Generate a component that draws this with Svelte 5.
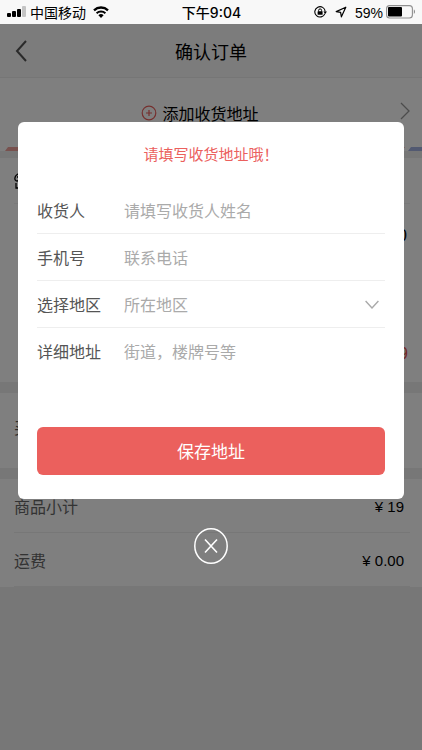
<script lang="ts">
  interface Fee {
    name: string;
    amount: string;
  }

  const fees: Fee[] = [
    { name: '商品小计', amount: '¥ 19' },
    { name: '运费', amount: '¥ 0.00' }
  ];

  let open = $state(true);
  let receiver = $state('');
  let phone = $state('');
  let area = $state('');
  let detail = $state('');

  function close() {
    open = false;
  }

  function save(event: SubmitEvent) {
    event.preventDefault();
    close();
  }
</script>

<div class="screen">
  <div class="status">
    <div class="status-side">
      <svg width="19" height="12" viewBox="0 0 19 12" aria-hidden="true">
        <rect x="0" y="7" width="4" height="4" rx="1" />
        <rect x="5" y="5" width="4" height="6" rx="1" />
        <rect x="10" y="3" width="4" height="8" rx="1" />
        <rect x="15" y="0" width="4" height="11" rx="1" fill="#c4c4c4" />
      </svg>
      <span class="carrier">中国移动</span>
      <svg class="wifi" width="16" height="12" viewBox="0 0 16 12" aria-hidden="true">
        <path d="M1 4.3a10.2 10.2 0 0 1 14 0" fill="none" stroke="#000" stroke-width="2.3" />
        <path d="M3.6 7.2a6.5 6.5 0 0 1 8.8 0" fill="none" stroke="#000" stroke-width="2" />
        <path d="M8 12L5.4 9.3a3.8 3.8 0 0 1 5.2 0z" />
      </svg>
    </div>
    <span class="time">下午9:04</span>
    <div class="status-side status-right">
      <svg width="13" height="12" viewBox="0 0 13 12" fill="none" stroke="#000" aria-hidden="true">
        <path d="M10.9 7.6A5.2 5.2 0 1 1 11.2 5.6" stroke-width="1.1" />
        <path d="M9.4 5.5h3.6l-1.8 2.4z" fill="#000" stroke="none" />
        <path d="M4.6 5.6V4.4a1.5 1.5 0 0 1 3 0v1.2" />
        <rect x="3.6" y="5.3" width="5" height="3.5" rx=".5" fill="#000" stroke="none" />
      </svg>
      <svg width="12" height="12" viewBox="0 0 12 12" fill="none" stroke="#000" aria-hidden="true">
        <path d="M10.8 1.2L1.2 5.6l4.4.8.8 4.4z" stroke-width="1.2" stroke-linejoin="round" />
      </svg>
      <span class="percent">59%</span>
      <svg class="battery" width="30" height="14" viewBox="0 0 30 14" aria-hidden="true">
        <rect x=".6" y=".6" width="25.8" height="12.4" rx="3" fill="none" stroke="#8f8f8f" stroke-width="1.1" />
        <rect x="2" y="2" width="14" height="9.6" rx="1" />
        <path d="M27.8 4.6c1.6.6 1.6 3.8 0 4.4z" fill="#8f8f8f" />
      </svg>
    </div>
  </div>

  <div class="page">
    <header class="nav">
      <a class="back" href="#back" aria-label="返回">
        <svg width="12" height="22" viewBox="0 0 12 22" fill="none" stroke="#555" stroke-width="2" aria-hidden="true">
          <path d="M11 1L2 11l9 10" />
        </svg>
      </a>
      <h1>确认订单</h1>
    </header>

    <section class="address">
      <button type="button" class="add" onclick={() => (open = true)}>
        <svg width="16" height="16" viewBox="0 0 16 16" fill="none" stroke="#eb605d" aria-hidden="true">
          <circle cx="8" cy="8" r="6.8" stroke-width="1.2" />
          <path d="M8 5v6M5 8h6" stroke-width="1.2" />
        </svg>
        添加收货地址
      </button>
      <svg width="10" height="18" viewBox="0 0 10 18" fill="none" stroke="#999" stroke-width="1.3" aria-hidden="true">
        <path d="M1 1l8 8-8 8" />
      </svg>
      <svg class="stripe" width="100%" height="4" aria-hidden="true">
        <defs>
          <pattern id="airmail" width="62" height="4" patternUnits="userSpaceOnUse">
            <path d="M8 0h25l-3 4H5z" fill="#f1a29c" />
            <path d="M39 0h23l-3 4H36z" fill="#a4b2e2" />
          </pattern>
        </defs>
        <rect width="100%" height="4" fill="url(#airmail)" />
      </svg>
    </section>

    <section class="card goods">
      <div class="shop">
        <svg width="16" height="16" viewBox="0 0 16 16" fill="none" stroke="#000" stroke-width="1.3" aria-hidden="true">
          <path d="M4 1h8c4 2 4 7 1 7s-3-2-5-2-2 2-5 2-3-5 1-7zM3 4h3M2 10v5h12v-5" />
        </svg>
      </div>
      <div class="item">¥ 19.00</div>
      <div class="total">¥ 19</div>
    </section>

    <section class="card message">买家留言</section>

    <section class="card">
      {#each fees as fee}
        <div class="fee">
          <span class="fee-name">{fee.name}</span>
          <span class="fee-amount">{fee.amount}</span>
        </div>
      {/each}
    </section>

    {#if open}
      <div class="mask">
        <form class="dialog" onsubmit={save}>
          <p class="tip">请填写收货地址哦！</p>
          <div class="row">
            <label for="receiver">收货人</label>
            <input id="receiver" type="text" placeholder="请填写收货人姓名" bind:value={receiver} />
          </div>
          <div class="row">
            <label for="phone">手机号</label>
            <input id="phone" type="tel" placeholder="联系电话" bind:value={phone} />
          </div>
          <div class="row">
            <label for="area">选择地区</label>
            <select id="area" bind:value={area}>
              <option value="">所在地区</option>
            </select>
            <svg class="arrow" width="14" height="9" viewBox="0 0 14 9" fill="none" stroke="#aaa" stroke-width="1.4" aria-hidden="true">
              <path d="M.6 1L7 8l6.4-7" />
            </svg>
          </div>
          <div class="row row-detail">
            <label for="detail">详细地址</label>
            <textarea id="detail" placeholder="街道，楼牌号等" bind:value={detail}></textarea>
          </div>
          <button type="submit" class="save">保存地址</button>
        </form>
        <button type="button" class="close" aria-label="关闭" onclick={close}>
          <svg width="34" height="36" viewBox="0 0 34 36" fill="none" stroke="#fff" aria-hidden="true">
            <ellipse cx="17" cy="18" rx="16.2" ry="17.2" stroke-width="1.5" />
            <path d="M11 11.5l12 13M23 11.5l-12 13" stroke-width="1.6" />
          </svg>
        </button>
      </div>
    {/if}
  </div>
</div>

<style>
  :global(body) {
    margin: 0;
    background: #efefef;
  }

  .screen {
    display: flex;
    flex-direction: column;
    min-height: 100vh;
    color: #000;
    font-family: "Noto Sans CJK SC", sans-serif;
    font-size: 16px;
    line-height: 24px;
  }

  svg {
    display: block;
    flex: none;
  }

  button,
  input,
  select,
  textarea {
    box-sizing: border-box;
    margin: 0;
    padding: 0;
    border: 0;
    background: none;
    color: inherit;
    font: inherit;
  }

  button {
    cursor: pointer;
  }

  /* Status bar */
  .status {
    display: flex;
    align-items: center;
    height: 24px;
    padding: 0 6px 0 7px;
    background: #f8f8f8;
    font-size: 14px;
  }

  .status-side {
    display: flex;
    flex: 1;
    align-items: center;
  }

  .carrier {
    margin-left: 4px;
  }

  .wifi {
    margin-left: 7px;
  }

  .time {
    padding-top: 2px;
    font-family: Inter, "Noto Sans CJK SC", sans-serif;
    font-weight: 500;
  }

  .status-right {
    justify-content: flex-end;
    gap: 8px;
  }

  .percent {
    padding-top: 2px;
    font-family: "Liberation Sans", sans-serif;
  }

  .battery {
    margin-left: -5px;
  }

  /* Order page */
  .page {
    position: relative;
    flex: 1;
    background: #efefef;
  }

  .nav {
    display: grid;
    grid-template-columns: 60px 1fr 60px;
    align-items: center;
    height: 54px;
    border-bottom: 1px solid #ececec;
    box-sizing: border-box;
    background: #f8f8f8;
  }

  .back {
    padding-left: 15px;
  }

  .nav h1 {
    margin: 0;
    font-size: 18px;
    font-weight: 400;
    text-align: center;
  }

  .address {
    position: relative;
    display: flex;
    align-items: center;
    height: 73px;
    padding: 0 12px 8px;
    box-sizing: border-box;
    background: #fff;
  }

  .add {
    display: flex;
    flex: 1;
    align-items: center;
    justify-content: center;
    gap: 5px;
    padding: 4px 12px 0 0;
  }

  .stripe {
    position: absolute;
    bottom: 0;
    left: 0;
  }

  .card {
    margin-top: 11px;
    padding: 0 12px 0 14px;
    background: #fff;
  }

  .goods {
    margin-top: 7px;
  }

  .shop {
    display: flex;
    align-items: center;
    height: 45px;
    border-bottom: 1px solid #f2f2f2;
  }

  .item,
  .total,
  .fee-amount {
    font-family: "Liberation Sans", sans-serif;
  }

  .item,
  .total {
    padding: 20px 3px 0 0;
    box-sizing: border-box;
    text-align: right;
  }

  .item {
    height: 118px;
  }

  .total {
    height: 60px;
    padding-right: 2px;
    color: #e5504c;
  }

  .message {
    height: 75px;
    color: #555;
    line-height: 68px;
  }

  .fee {
    display: flex;
    align-items: center;
    justify-content: space-between;
    height: 53px;
    padding-right: 6px;
    border-bottom: 1px solid #eee;
  }

  .fee-name {
    color: #666;
  }

  .fee-amount {
    padding-top: 2px;
    font-size: 15px;
  }

  /* Address dialog */
  .mask {
    position: absolute;
    inset: 0;
    padding: 98px 18px 0;
    background: rgba(0, 0, 0, 0.5);
  }

  .dialog {
    padding: 20px 19px 24px;
    border-radius: 6px;
    background: #fff;
  }

  .tip {
    margin: 0 0 21px;
    color: #eb605d;
    font-size: 15px;
    text-align: center;
  }

  .row {
    display: flex;
    align-items: center;
    height: 47px;
    border-bottom: 1px solid #eee;
    box-sizing: border-box;
  }

  .row label {
    width: 87px;
    color: #555;
  }

  .row input,
  .row select,
  .row textarea {
    flex: 1;
    min-width: 0;
    outline: none;
  }

  .row select {
    appearance: none;
    color: #aaa;
  }

  .row ::placeholder {
    color: #aaa;
    opacity: 1;
  }

  .arrow {
    margin-right: 6px;
  }

  .row-detail {
    align-items: flex-start;
    height: 99px;
    padding-top: 11px;
    border-bottom: 0;
  }

  .row-detail textarea {
    height: 76px;
    resize: none;
  }

  .save {
    display: block;
    width: 100%;
    height: 48px;
    border-radius: 6px;
    background: #eb605d;
    color: #fff;
    font-size: 17px;
  }

  .close {
    display: block;
    margin: 29px auto 0;
  }
</style>
